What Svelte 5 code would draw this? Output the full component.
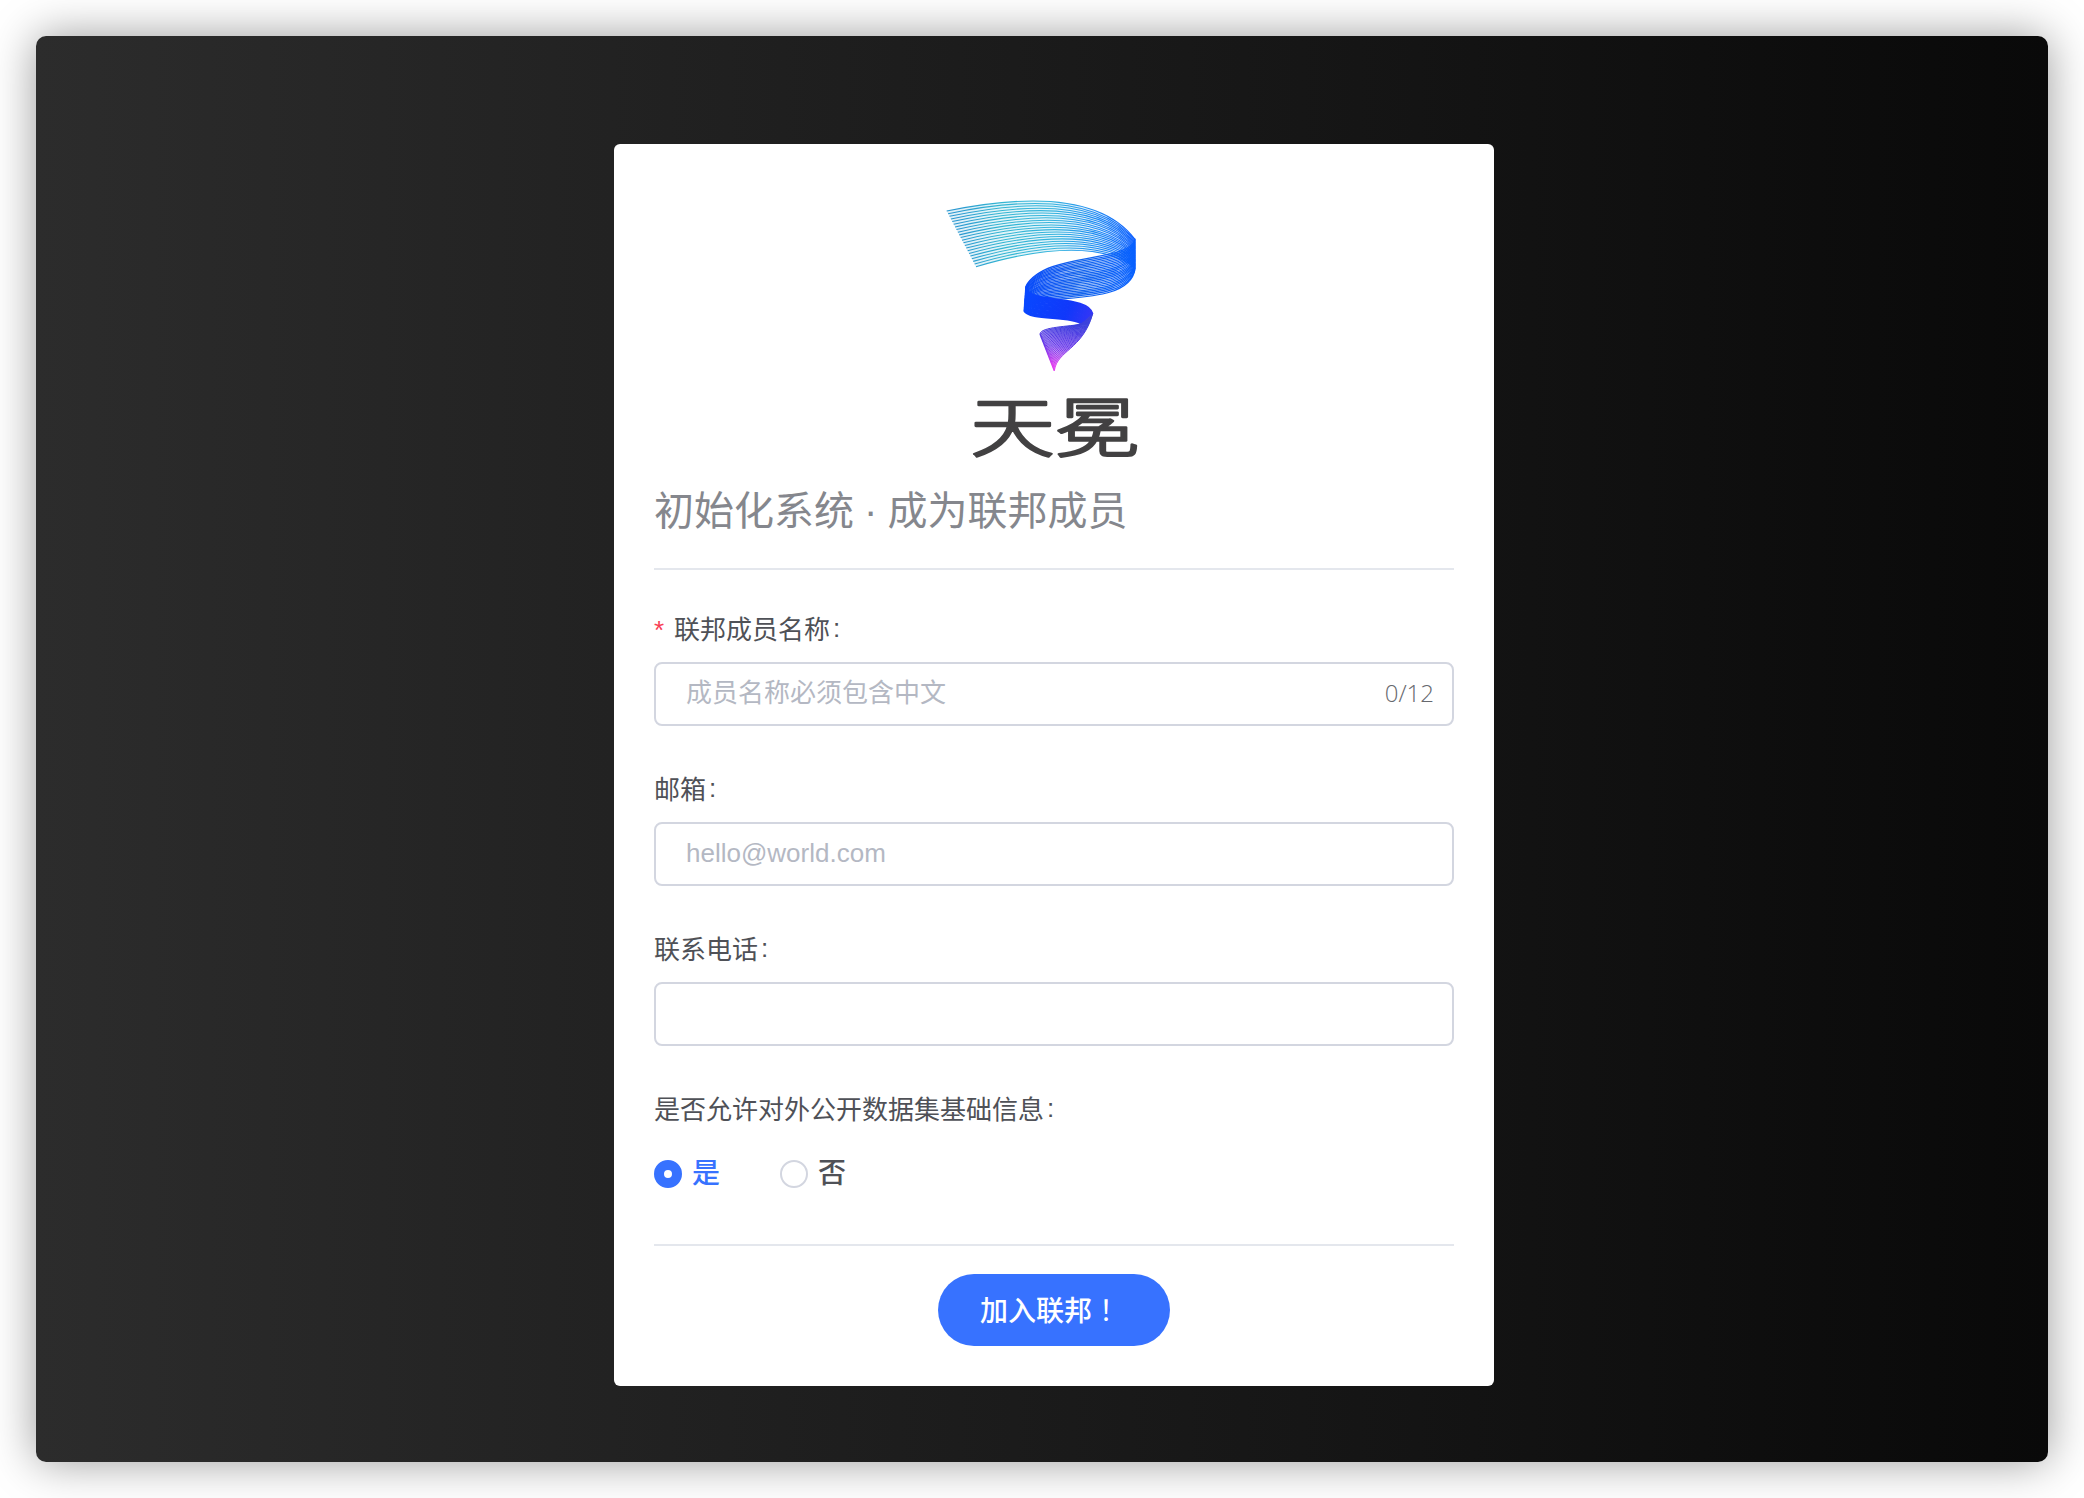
<script>
  let name = $state('');
  let email = $state('');
  let phone = $state('');
  let open = $state('yes');

  // Each ribbon is a bundle of lines blended between two cubic curves.
  const ribbons = [
    {
      paint: 'sky', n: 22, w: 3.2,
      a: [80, 93, 300, 48, 540, 38, 645, 178],
      b: [168, 260, 330, 212, 530, 178, 645, 262]
    },
    {
      paint: 'mid', n: 24, w: 3.6,
      a: [645, 178, 625, 250, 375, 215, 318, 318],
      b: [645, 268, 625, 390, 330, 330, 312, 392]
    },
    {
      paint: 'deep', n: 24, w: 5,
      a: [318, 318, 315, 375, 505, 340, 518, 402],
      b: [312, 392, 328, 424, 450, 405, 485, 432]
    },
    {
      paint: 'tip', n: 24, w: 3,
      a: [485, 432, 450, 440, 362, 440, 360, 462],
      b: [518, 402, 487, 510, 412, 510, 403, 572]
    }
  ];

  const lines = ribbons.flatMap((r) =>
    Array.from({ length: r.n }, (_, i) => {
      const t = i / (r.n - 1);
      const p = r.a.map((v, k) => (v + (r.b[k] - v) * t).toFixed(1));
      return {
        paint: r.paint,
        w: r.w,
        d: `M${p[0]} ${p[1]}C${p[2]} ${p[3]} ${p[4]} ${p[5]} ${p[6]} ${p[7]}`
      };
    })
  );
</script>

<main class="window">
  <section class="card">
    <svg class="logo" viewBox="0 0 720 870" role="img" aria-label="天冕">
      <defs>
        <linearGradient id="sky" gradientUnits="userSpaceOnUse" x1="130" y1="250" x2="645" y2="190">
          <stop offset="0" stop-color="#2a98d0" />
          <stop offset=".25" stop-color="#34b6d2" />
          <stop offset=".55" stop-color="#36b4de" />
          <stop offset=".82" stop-color="#1a84f5" />
          <stop offset="1" stop-color="#0a5cff" />
        </linearGradient>
        <linearGradient id="mid" gradientUnits="userSpaceOnUse" x1="645" y1="0" x2="312" y2="0">
          <stop offset="0" stop-color="#0660ff" />
          <stop offset=".5" stop-color="#1464ec" />
          <stop offset="1" stop-color="#0648fa" />
        </linearGradient>
        <linearGradient id="deep" gradientUnits="userSpaceOnUse" x1="312" y1="350" x2="520" y2="440">
          <stop offset="0" stop-color="#0848ff" />
          <stop offset=".6" stop-color="#1038fa" />
          <stop offset="1" stop-color="#3b35f5" />
        </linearGradient>
        <linearGradient id="tip" gradientUnits="userSpaceOnUse" x1="440" y1="430" x2="425" y2="560">
          <stop offset="0" stop-color="#3a40dc" />
          <stop offset=".55" stop-color="#6a38ea" />
          <stop offset="1" stop-color="#e23cf0" />
        </linearGradient>
      </defs>
      <path class="wash" fill="url(#sky)" d="M80 93C300 48 540 38 645 178L645 262C530 178 330 212 168 260Z" />
      <path class="wash" fill="url(#mid)" d="M645 178C625 250 375 215 318 318L312 392C330 330 625 390 645 268Z" />
      <path fill="url(#tip)" opacity=".5" d="M485 432C450 440 362 440 360 462L403 572C412 510 487 510 518 402Z" />
      {#each lines as l}
        <path d={l.d} fill="none" stroke="url(#{l.paint})" stroke-width={l.w} />
      {/each}
      <path d="M645 176V268" fill="none" stroke="#0b5fff" stroke-width="4" />
      <path d="M360 462L403 572" fill="none" stroke="url(#tip)" stroke-width="4" />
      <text class="wordmark" transform="translate(151 812) scale(1 .77)">天冕</text>
    </svg>

    <h1>初始化系统 · 成为联邦成员</h1>

    <form onsubmit={(e) => e.preventDefault()}>
      <div class="item">
        <label for="name"><i>*</i>联邦成员名称<b>:</b></label>
        <div class="field">
          <input id="name" maxlength="12" placeholder="成员名称必须包含中文" bind:value={name} />
          <span class="count">{name.length}/12</span>
        </div>
      </div>
      <div class="item">
        <label for="email">邮箱<b>:</b></label>
        <div class="field">
          <input id="email" placeholder="hello@world.com" bind:value={email} />
        </div>
      </div>
      <div class="item">
        <label for="phone">联系电话<b>:</b></label>
        <div class="field"><input id="phone" bind:value={phone} /></div>
      </div>
      <div class="item last">
        <span class="label">是否允许对外公开数据集基础信息<b>:</b></span>
        <div class="radios">
          <label class="radio" class:on={open === 'yes'}>
            <input type="radio" value="yes" bind:group={open} />是
          </label>
          <label class="radio" class:on={open === 'no'}>
            <input type="radio" value="no" bind:group={open} />否
          </label>
        </div>
      </div>
      <div class="actions"><button>加入联邦<span class="bang" lang="zh-TW">！</span></button></div>
    </form>
  </section>
</main>

<style>
  :global(body) {
    background: #fff;
    overflow: hidden;
  }
  .window {
    box-sizing: border-box;
    width: 2012px;
    height: 1426px;
    margin: 36px;
    padding: 108px 0 0 578px;
    border-radius: 10px;
    background: linear-gradient(90deg, #2c2c2c, #090909);
    box-shadow: 0 0 46px rgba(0, 0, 0, 0.4);
    font-family: 'Liberation Sans', 'Noto Sans CJK SC', sans-serif;
    display: flex;
    align-items: flex-start;
  }
  .card {
    box-sizing: border-box;
    width: 880px;
    height: 1242px;
    padding: 36px 40px 0;
    border-radius: 6px;
    background: #fff;
  }
  .logo {
    display: block;
    width: 240px;
    height: 290px;
    margin-left: 266px;
  }
  .wash {
    opacity: 0.15;
  }
  .wordmark {
    font: 300 254px 'Noto Sans CJK SC', sans-serif;
    fill: #424142;
    stroke: #424142;
    stroke-width: 9;
    stroke-linejoin: round;
  }
  h1 {
    box-sizing: border-box;
    margin: 0;
    height: 100px;
    border-bottom: 2px solid #e4e7ed;
    font: 400 40px/82px 'Liberation Sans', 'Noto Sans CJK SC', sans-serif;
    word-spacing: -1px;
    color: #85878d;
  }
  form {
    padding-top: 34px;
  }
  .item {
    height: 160px;
  }
  .item > label,
  .label {
    display: flex;
    height: 58px;
    line-height: 52px;
    font-size: 26px;
    color: #4f5157;
  }
  i {
    width: 20px;
    font-style: normal;
    color: #f84055;
  }
  b {
    font-weight: 400;
    padding-left: 3px;
    line-height: 48px;
  }
  .field {
    box-sizing: border-box;
    display: flex;
    align-items: center;
    width: 800px;
    height: 64px;
    padding: 0 18px 0 30px;
    border: 2px solid #d3d6e0;
    border-radius: 8px;
  }
  .field input {
    flex: 1;
    min-width: 0;
    height: 56px;
    padding: 0 0 1px;
    border: 0;
    outline: 0;
    background: none;
    font: 26px 'Liberation Sans', 'Noto Sans CJK SC', sans-serif;
    color: #4f5157;
  }
  .field input::placeholder {
    color: #b4b8c3;
    opacity: 1;
  }
  .count {
    padding-bottom: 3px;
    font: 300 24px 'Open Sans', 'Noto Sans', sans-serif;
    color: #66686e;
  }
  .last {
    box-sizing: border-box;
    height: 162px;
    border-bottom: 2px solid #e4e7ed;
  }
  .radios {
    display: flex;
    gap: 60px;
    padding-top: 6px;
  }
  .radio {
    display: flex;
    align-items: center;
    gap: 10px;
    height: 48px;
    font-size: 28px;
    font-weight: 500;
    line-height: 48px;
    padding-top: 2px;
    color: #4f5157;
  }
  .radio input {
    appearance: none;
    box-sizing: border-box;
    width: 28px;
    height: 28px;
    margin: 0;
    border: 2px solid #d3d6e0;
    border-radius: 50%;
  }
  .radio.on {
    color: #3772ff;
  }
  .radio.on input {
    border: 10px solid #3772ff;
  }
  .actions {
    display: flex;
    justify-content: center;
    padding-top: 28px;
  }
  button {
    width: 232px;
    height: 72px;
    padding: 0 8px 2px 0;
    border: 0;
    border-radius: 36px;
    background: #3772ff;
    color: #fff;
    font: 500 28px 'Noto Sans CJK SC', sans-serif;
  }
  .bang {
    font-family: 'Noto Sans CJK TC', sans-serif;
    font-weight: 400;
  }
</style>
